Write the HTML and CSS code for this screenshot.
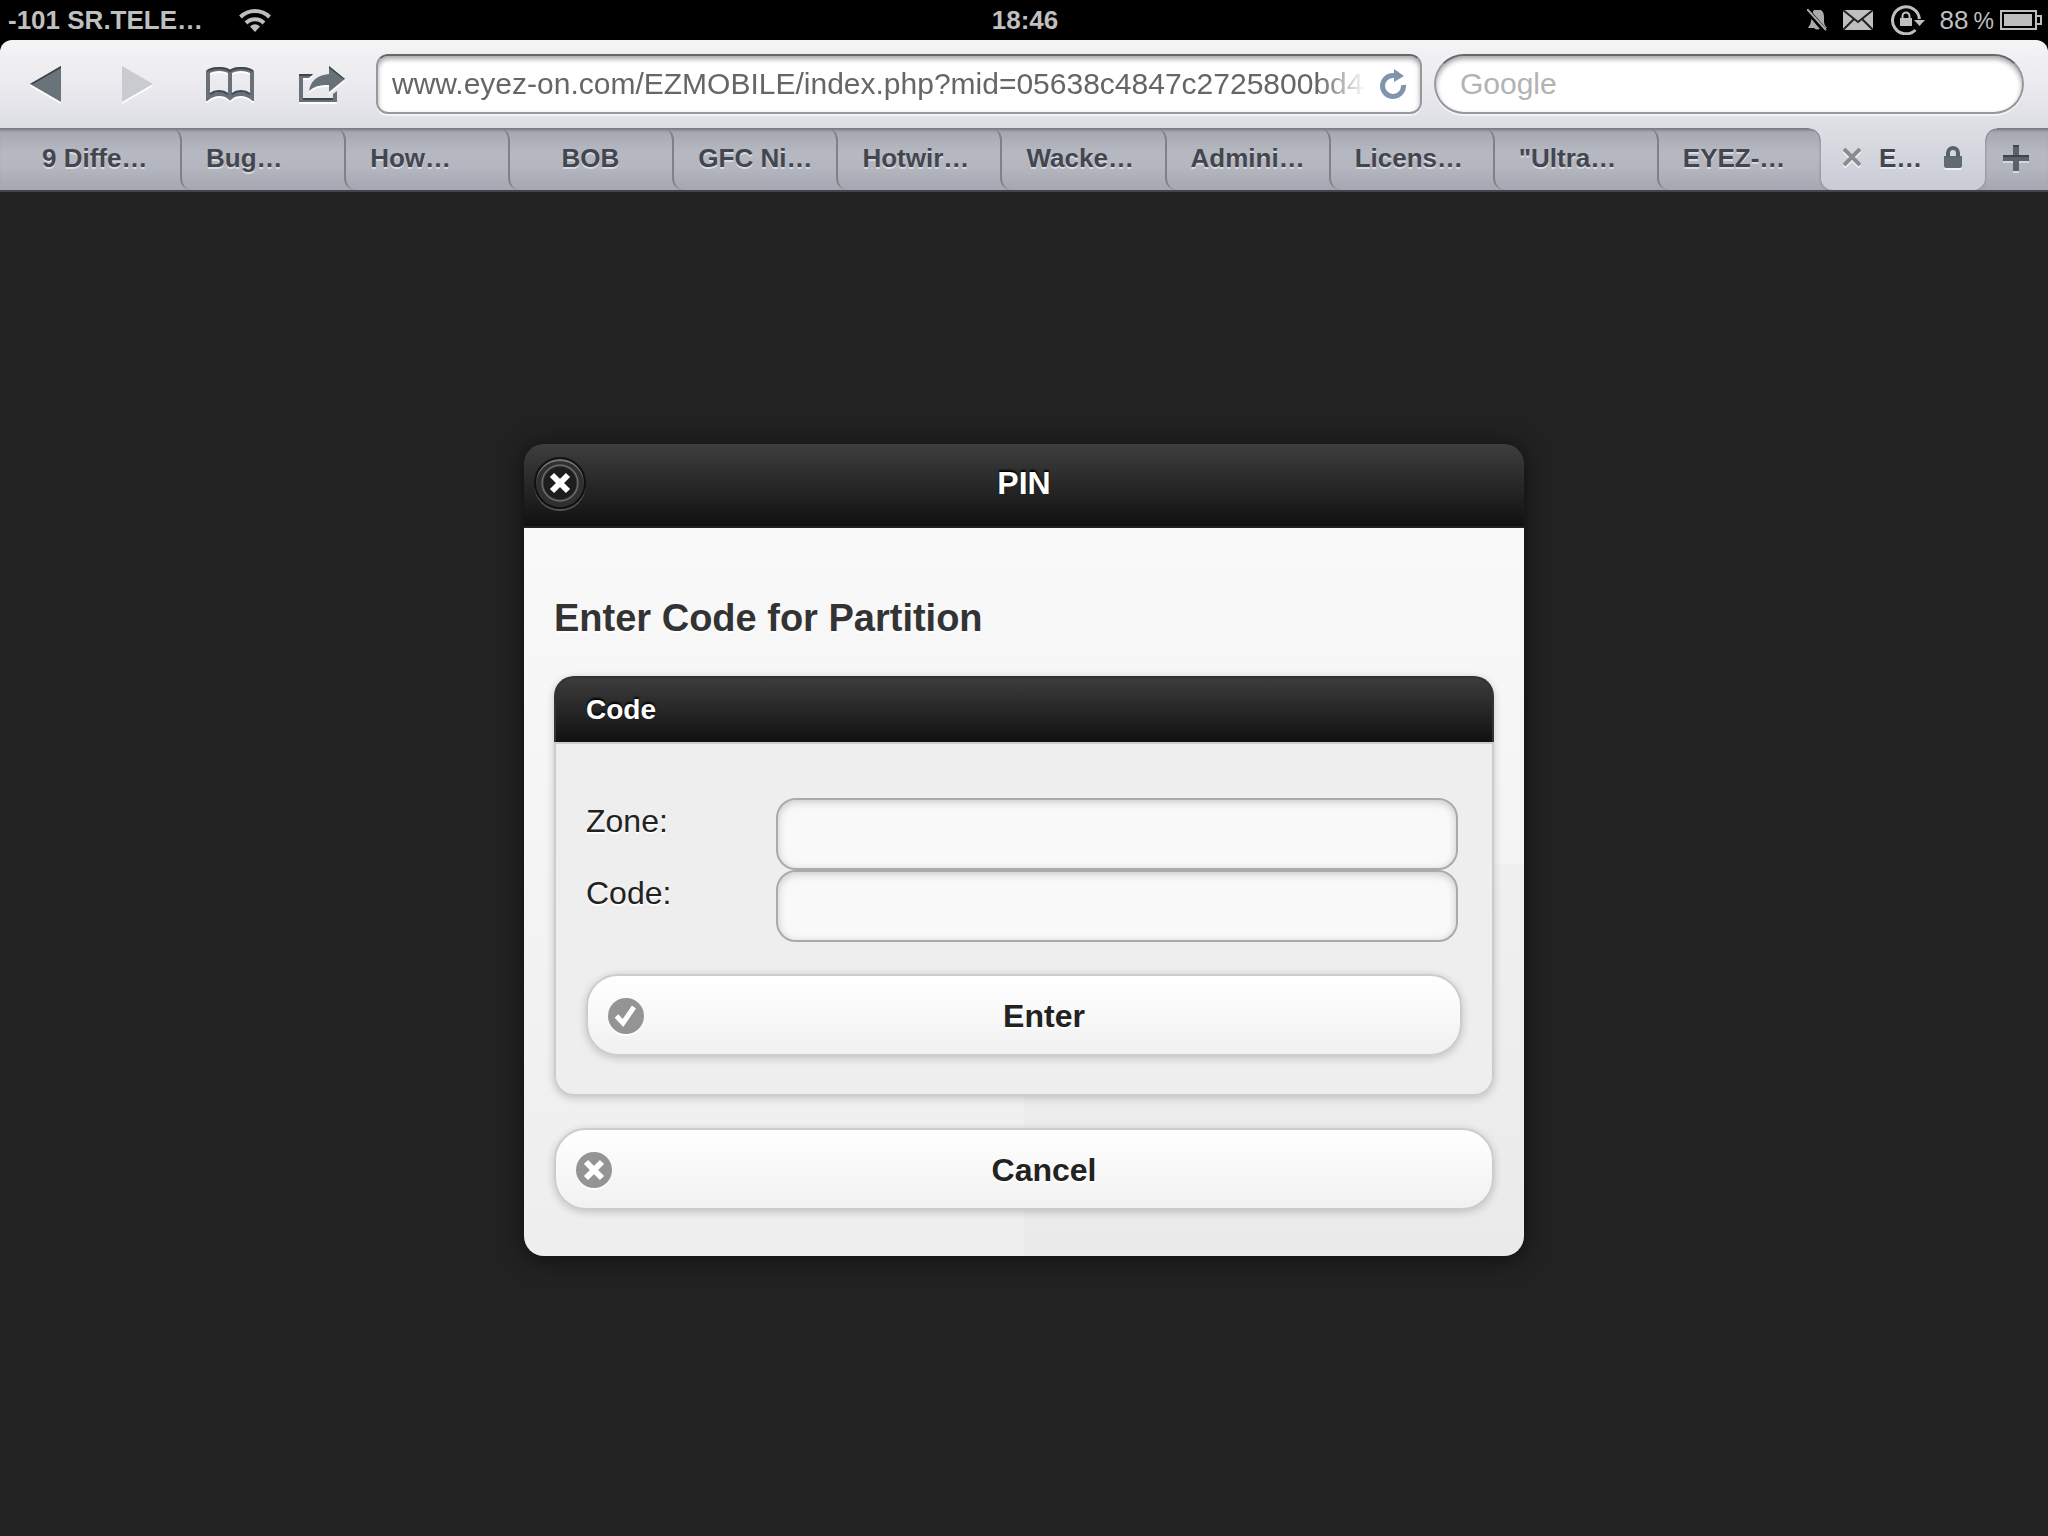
FILE: index.html
```html
<!DOCTYPE html>
<html lang="en">
<head>
  <meta charset="UTF-8" />
  <meta name="viewport" content="width=device-width, initial-scale=1.0"/>
  <title>PIN</title>
  <link rel="stylesheet" href="styles.css">
</head>
<body>
  <div class="statusbar">
    <div class="status-left">
      <span>-101 SR.TELE…</span>
      <svg width="32" height="24" viewBox="0 0 32 24" fill="none" stroke="#bfbfbf" stroke-width="4">
        <path d="M1.500 9A20.500 20.500 0 0 1 30.500 9" />
        <path d="M7 15A12.500 12.500 0 0 1 25 15" />
        <path d="M16 24L11 18.500Q16 14 21 18.500Z" fill="#bfbfbf" stroke="none" />
      </svg>
    </div>
    <span>18:46</span>
    <div class="status-right">
      <svg width="20" height="22" viewBox="0 0 20 22">
        <path d="M7 1H14Q17 3 17 8V13Q17 16 20 19H1Q4 15 4.500 10Q5 3 7 1Z" fill="#aaa" />
        <path d="M7 19Q10 22 14 19Z" fill="#aaa" />
        <path d="M0 1L18 22" stroke="#000" stroke-width="5" />
        <path d="M0 0L19 21" stroke="#aaa" stroke-width="2" />
      </svg>
      <svg class="mail" width="30" height="20" viewBox="0 0 30 20">
        <path d="M0 0H30V20H0Z" fill="#bfbfbf" />
        <path d="M0 0L15 12L30 0M0 20L11 9M30 20L19 9" fill="none" stroke="#222" stroke-width="2" />
      </svg>
      <svg class="rotation" width="34" height="30" viewBox="0 0 34 30">
        <path d="M24.500 25A13.500 13.500 0 1 1 28.500 14" fill="none" stroke="#bfbfbf" stroke-width="3" />
        <path d="M23 15H34L28.500 21Z" fill="#bfbfbf" />
        <path d="M9 13H21V21H9Z" fill="#bfbfbf" />
        <path d="M11.500 13V11A3.500 3.500 0 0 1 18.500 11V13" fill="none" stroke="#bfbfbf" stroke-width="2" />
      </svg>
      <span class="percent">88&thinsp;<small>%</small></span>
      <svg width="42" height="20" viewBox="0 0 42 20">
        <path d="M1 1H36V19H1Z" fill="none" stroke="#bfbfbf" stroke-width="2" />
        <path d="M4 4H32V16H4Z" fill="#bfbfbf" />
        <path d="M37 6H41V14H37" fill="none" stroke="#bfbfbf" stroke-width="2" />
      </svg>
    </div>
  </div>

  <div class="toolbar">
    <button class="tool" aria-label="Back">
      <svg width="32" height="36" viewBox="0 0 32 36">
        <path d="M0 18L31 0V36Z" fill="#6a727a" />
        <path d="M0 18L31 0V2L3 18Z" fill="#3c434a" />
      </svg>
    </button>
    <button class="tool" aria-label="Forward" disabled>
      <svg width="32" height="36" viewBox="0 0 32 36"><path d="M0 0L31 18L0 36Z" fill="#c9cbd0" /></svg>
    </button>
    <button class="tool" aria-label="Bookmarks">
      <svg width="48" height="34" viewBox="0 0 48 34" fill="none" stroke="#68717a" stroke-width="4">
        <path d="M24 30V5Q20 2 13 2Q6 2 2 5V31Q7 27 13 27Q20 27 24 31Q28 27 35 27Q41 27 46 31V5Q42 2 35 2Q28 2 24 5" />
        <path d="M1 4Q6 1 13 1Q20 1 24 4Q28 1 35 1Q42 1 47 4M4 27Q8 24 13 24Q18 24 22 27M26 27Q30 24 35 24Q40 24 44 27" stroke="#3f464d" stroke-width="2" />
      </svg>
    </button>
    <button class="tool" aria-label="Share">
      <svg width="46" height="36" viewBox="0 0 46 36">
        <path d="M14 8H0V36H38V25L34 28V32H4V12H10Z" fill="#68717a" />
        <path d="M14 8H0V10H12ZM4 32H34V34H4Z" fill="#3f464d" />
        <path d="M30 0L46 13L30 26V19Q17 18 10 25Q12 10 30 8Z" fill="#68717a" />
        <path d="M30 0L46 13H44L30 2Z" fill="#3f464d" />
      </svg>
    </button>
    <div class="field address">
      <input type="text" class="field-input address-input" aria-label="Address" value="www.eyez-on.com/EZMOBILE/index.php?mid=05638c4847c2725800bd4">
      <button class="reload" aria-label="Reload">
        <svg width="26" height="30" viewBox="0 0 26 30">
          <path d="M23.500 16A10.500 10.500 0 1 1 14 6.500" fill="none" stroke="#8094ae" stroke-width="5" />
          <path d="M14 0L24 7L14 13Z" fill="#8094ae" />
        </svg>
      </button>
    </div>
    <div class="field search">
      <input type="search" class="field-input search-input" aria-label="Search" placeholder="Google">
    </div>
  </div>

  <nav class="tabs">
    <a href="#" class="tab first">9 Diffe…</a>
    <a href="#" class="tab">Bug…</a>
    <a href="#" class="tab">How…</a>
    <a href="#" class="tab short">BOB</a>
    <a href="#" class="tab">GFC Ni…</a>
    <a href="#" class="tab">Hotwir…</a>
    <a href="#" class="tab">Wacke…</a>
    <a href="#" class="tab">Admini…</a>
    <a href="#" class="tab">Licens…</a>
    <a href="#" class="tab">"Ultra…</a>
    <a href="#" class="tab">EYEZ-…</a>
    <div class="tab active">
      <button class="tab-button" aria-label="Close tab">
        <svg width="18" height="20" viewBox="0 0 18 20" fill="none" stroke-width="4">
          <path d="M1 3L17 19M17 3L1 19" stroke="#f2f2f5" />
          <path d="M1 1L17 17M17 1L1 17" stroke="#8a8b90" />
        </svg>
      </button>
      <span>E…</span>
      <svg class="lock" width="18" height="24" viewBox="0 0 18 24">
        <path d="M0 12H18V22Q18 24 16 24H2Q0 24 0 22Z" fill="#f0f1f5" />
        <path d="M0 10H18V20Q18 22 16 22H2Q0 22 0 20Z" fill="#626a73" />
        <path d="M4 11V7A5 5 0 0 1 14 7V11" fill="none" stroke="#59616a" stroke-width="4" />
      </svg>
    </div>
    <button class="tab-button new-tab" aria-label="New tab">
      <svg width="26" height="28" viewBox="0 0 26 28">
        <path d="M10 2H16V12H26V18H16V28H10V18H0V12H10Z" fill="#d5d7de" />
        <path d="M10 0H16V10H26V16H16V26H10V16H0V10H10Z" fill="#59616b" />
        <path d="M10 0H16V2H10ZM0 10H26V12H0Z" fill="#3f454d" />
      </svg>
    </button>
  </nav>

  <main class="page">
    <div class="dialog" role="dialog" aria-labelledby="dialog-title">
      <div class="dialog-header">
        <button class="close" aria-label="Close">
          <svg width="22" height="22" viewBox="0 0 22 22"><path d="M3 3L19 19M19 3L3 19" stroke="#fff" stroke-width="6" /></svg>
        </button>
        <h1 id="dialog-title">PIN</h1>
      </div>
      <div class="dialog-content">
        <h3>Enter Code for Partition</h3>
        <form class="group">
          <h4>Code</h4>
          <div class="group-body">
            <div class="row">
              <label for="zone">Zone:</label>
              <input type="text" id="zone" />
            </div>
            <div class="row">
              <label for="code">Code:</label>
              <input type="password" id="code" />
            </div>
            <button type="button" class="btn enter">
              <svg class="btn-icon" width="36" height="38" viewBox="0 0 36 38">
                <circle cx="18" cy="20" r="18" fill="#fff" />
                <circle cx="18" cy="18" r="18" fill="#949494" />
                <path d="M8.500 18L15 25L26 9" fill="none" stroke="#fff" stroke-width="5" />
              </svg>
              Enter
            </button>
          </div>
        </form>
        <button type="button" class="btn">
          <svg class="btn-icon" width="36" height="38" viewBox="0 0 36 38">
            <circle cx="18" cy="20" r="18" fill="#fff" />
            <circle cx="18" cy="18" r="18" fill="#949494" />
            <path d="M10 10L26 26M26 10L10 26" stroke="#fff" stroke-width="6" />
          </svg>
          Cancel
        </button>
      </div>
    </div>
  </main>
</body>
</html>
```

FILE: styles.css
```css
* {
  box-sizing: border-box;
}
body {
  margin: 0;
  min-height: 100vh;
  background-color: #000;
  font-family: "Liberation Sans", Arial, sans-serif;
  display: flex;
  flex-direction: column;
}
button {
  border: none;
  background: none;
  padding: 0;
  font-family: inherit;
}
svg {
  display: block;
  flex: none;
}

/* status bar */
.statusbar {
  display: grid;
  grid-template-columns: 1fr auto 1fr;
  align-items: center;
  height: 40px;
  padding: 0 6px 0 8px;
  color: #bfbfbf;
  font-size: 26px;
  font-weight: bold;
}
.status-left {
  display: flex;
  align-items: center;
  gap: 36px;
}
.status-right {
  display: flex;
  align-items: center;
  justify-content: flex-end;
}
.mail {
  margin-left: 16px;
}
.rotation {
  margin-left: 18px;
}
.percent {
  margin: 0 6px 0 14px;
  font-weight: normal;
}
.percent small {
  font-size: 23px;
}

/* browser toolbar */
.toolbar {
  display: flex;
  align-items: center;
  height: 88px;
  padding-right: 24px;
  border-radius: 12px 12px 0 0;
  background: linear-gradient(#f4f4f6, #ececf0 45%, #dddee4);
}
.tool {
  width: 92px;
  height: 60px;
  display: flex;
  align-items: center;
  justify-content: center;
  filter: drop-shadow(0 2px 0 #fff);
}
.field {
  display: flex;
  align-items: center;
  min-width: 0;
  height: 60px;
  border: 2px solid #97989c;
  border-top-color: #66676b;
  background: #fff;
  box-shadow: inset 0 3px 5px rgba(0, 0, 0, 0.35), 0 2px 0 rgba(255, 255, 255, 0.6);
}
.address {
  flex: 16 1 0;
  margin: 0 12px 0 8px;
  border-radius: 12px;
}
.search {
  flex: 9 1 0;
  border-radius: 30px;
}
.field-input {
  flex: 1;
  min-width: 0;
  height: 50px;
  padding: 0;
  border: none;
  outline: none;
  background: transparent;
  font-family: inherit;
  font-size: 30px;
  color: #666;
}
.address-input {
  margin-left: 14px;
  -webkit-mask-image: linear-gradient(to left, transparent 8px, #000 56px);
  mask-image: linear-gradient(to left, transparent 8px, #000 56px);
}
.search-input {
  margin: 0 24px;
}
.field-input::placeholder {
  color: #b3b3b3;
}
.reload {
  margin: 0 14px 0 6px;
}

/* tabs */
.tabs {
  display: grid;
  grid-template-columns: minmax(0, 180fr) repeat(11, minmax(0, 164fr)) minmax(0, 63fr);
  height: 64px;
  border-bottom: 2px solid #444548;
  background: linear-gradient(#a3a5af, #b6b8c2 40%, #b3b5bf 65%, #a4a6b1);
  box-shadow: inset 0 4px 3px -2px #75767c;
}
.tab {
  position: relative;
  display: flex;
  align-items: center;
  padding: 0 0 2px 26px;
  color: #42464e;
  font-size: 26px;
  font-weight: bold;
  white-space: nowrap;
  text-decoration: none;
  text-shadow: 0 2px 0 rgba(255, 255, 255, 0.5);
}
.tab.first {
  padding-left: 42px;
}
.tab.short {
  justify-content: center;
  padding-left: 0;
}
/* a divider bends left at its top and right at its foot */
.tab::before {
  content: "";
  position: absolute;
  left: 0;
  bottom: 0;
  width: 12px;
  height: 31px;
  border-left: 2px solid #808188;
  border-bottom-left-radius: 12px;
}
.tab::after {
  content: "";
  position: absolute;
  right: -2px;
  top: 0;
  width: 12px;
  height: 31px;
  border-right: 2px solid #808188;
  border-top-right-radius: 12px;
}
.tab.first::before {
  display: none;
}
.tab.active {
  padding-left: 22px;
  background: linear-gradient(#dddee3, #c9ccd6);
  border-radius: 0 0 12px 12px;
  box-shadow: 0 0 3px #777;
  clip-path: inset(0 -12px);
}
.tab.active::before,
.tab.active::after {
  top: 0;
  width: 12px;
  height: 12px;
  border: none;
  border-radius: 0;
}
.tab.active::before {
  left: -12px;
  background: radial-gradient(circle at 0 100%, transparent 10px, #85868d 11px, #dddee3 12px);
}
.tab.active::after {
  right: -12px;
  background: radial-gradient(circle at 100% 100%, transparent 10px, #85868d 11px, #dddee3 12px);
}
.tab.active span {
  margin: 0 22px 0 18px;
}
.tab-button {
  display: flex;
  align-items: center;
}
.new-tab {
  justify-content: center;
}

/* page */
.page {
  flex: 1;
  padding: 252px 0 40px;
  background: #222;
}
.dialog {
  width: 92%;
  max-width: 1000px;
  margin: 0 auto;
  border-radius: 20px;
  box-shadow: 0 2px 24px rgba(0, 0, 0, 0.6);
}
.dialog-header {
  display: grid;
  grid-template-columns: 52px 1fr 52px;
  align-items: center;
  height: 84px;
  padding: 0 10px 4px;
  border-bottom: 2px solid #222;
  border-radius: 20px 20px 0 0;
  background: linear-gradient(#3e3e3e, #111);
}
.close {
  display: flex;
  align-items: center;
  justify-content: center;
  width: 52px;
  height: 52px;
  border: 2px solid #111;
  border-radius: 50%;
  background: radial-gradient(circle, #1d1d1d 16px, #777 18px, #303030 19px);
  box-shadow: inset 0 2px 0 #777, 0 2px 0 #555;
}
.dialog h1 {
  margin: 0;
  color: #fff;
  font-size: 32px;
  text-align: center;
  text-shadow: 0 -2px 2px #000;
}
.dialog-content {
  padding: 68px 30px 46px;
  border-radius: 0 0 20px 20px;
  background:
    linear-gradient(rgba(0, 0, 0, 0.015), rgba(0, 0, 0, 0.015)) 100% 100% / 50% 392px no-repeat,
    linear-gradient(#f9f9f9, #eee);
}
.dialog h3 {
  margin: 0 0 36px;
  color: #333;
  font-size: 38px;
  line-height: 44px;
  text-shadow: 0 2px 0 #fff;
}
.group {
  margin-bottom: 32px;
  border-radius: 20px;
  box-shadow: 0 2px 8px rgba(0, 0, 0, 0.2);
}
.group h4 {
  margin: 0;
  height: 66px;
  padding-left: 30px;
  border: 2px solid #333;
  border-bottom: none;
  border-radius: 20px 20px 0 0;
  background: linear-gradient(#3c3c3c, #111);
  color: #fff;
  font-size: 28px;
  line-height: 64px;
  text-shadow: 0 -2px 2px #000;
}
.group-body {
  padding: 54px 30px 38px;
  border: 2px solid #ccc;
  border-radius: 0 0 20px 20px;
  background: #eee;
}
.row {
  display: grid;
  grid-template-columns: 190px 1fr;
  padding-right: 4px;
}
.row label {
  padding-top: 4px;
  color: #222;
  font-size: 32px;
  line-height: 38px;
  text-shadow: 0 2px 0 #fff;
}
.row input {
  min-width: 0;
  height: 72px;
  padding: 0 14px;
  border: 2px solid #aaa;
  border-radius: 20px;
  outline: none;
  background: #f9f9f9;
  box-shadow: inset 0 2px 8px rgba(0, 0, 0, 0.2);
  font-family: inherit;
  font-size: 32px;
}
.btn {
  position: relative;
  width: 100%;
  height: 82px;
  padding: 2px 40px 0 80px;
  border: 2px solid #ccc;
  border-radius: 32px;
  background: linear-gradient(#fff, #f1f1f1);
  box-shadow: 0 2px 8px rgba(0, 0, 0, 0.2);
  color: #222;
  font-size: 32px;
  font-weight: bold;
  text-shadow: 0 2px 0 #fff;
}
.btn.enter {
  margin-top: 32px;
}
.btn-icon {
  position: absolute;
  left: 20px;
  top: 22px;
}
```
